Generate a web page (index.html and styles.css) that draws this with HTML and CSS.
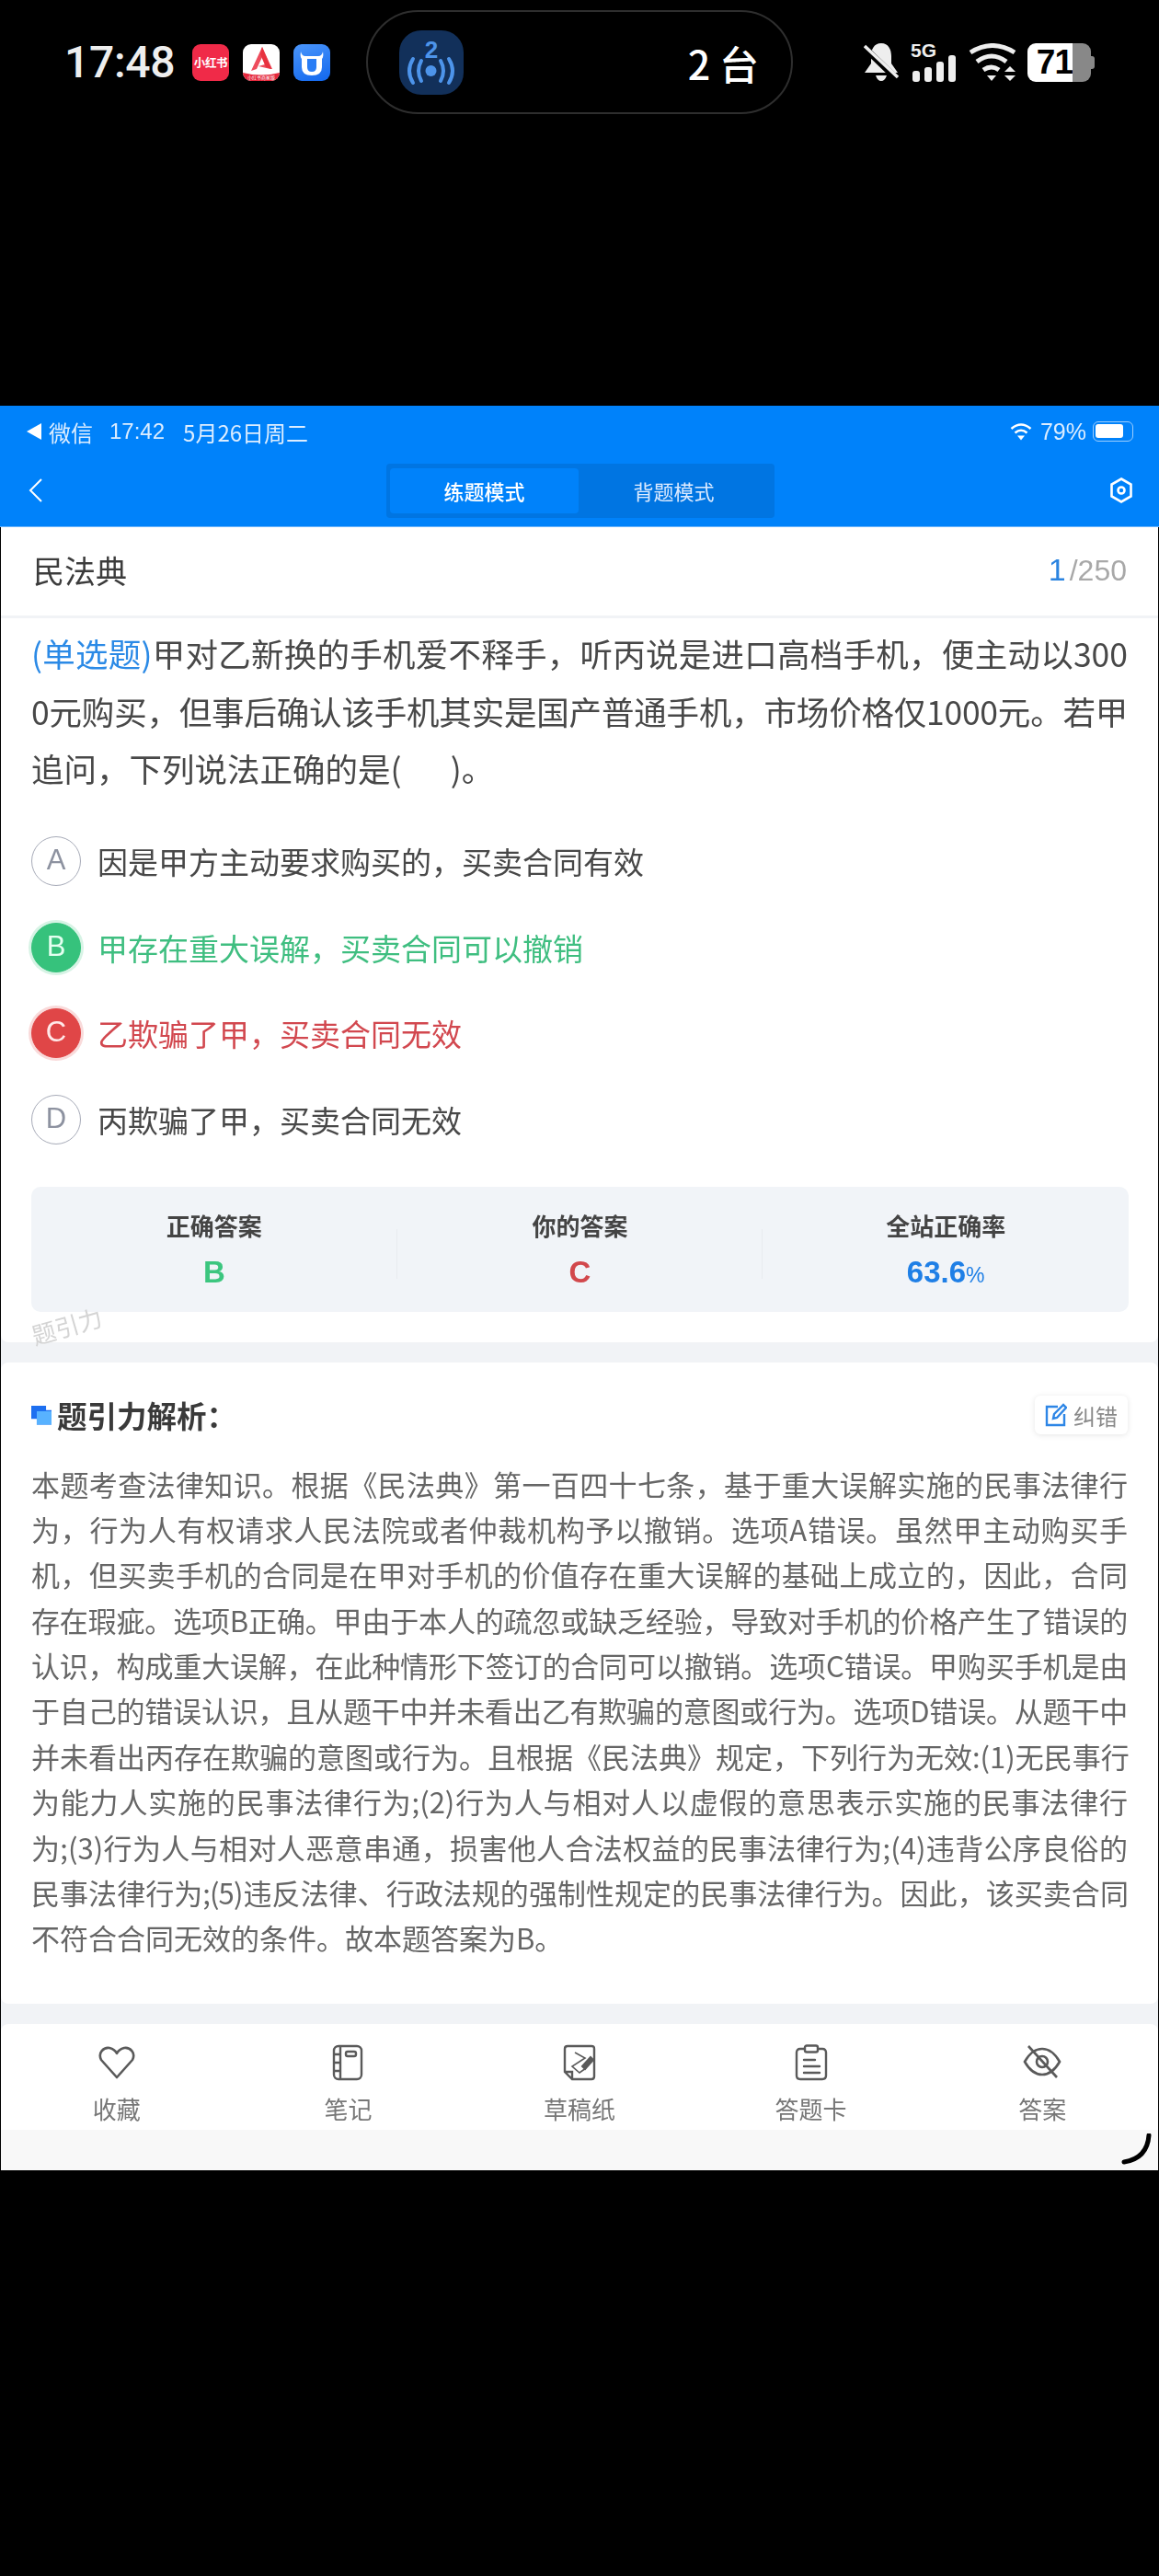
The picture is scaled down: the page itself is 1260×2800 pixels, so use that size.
FILE: index.html
```html
<!DOCTYPE html>
<html lang="zh-CN">
<head>
<meta charset="utf-8">
<title>民法典</title>
<link rel="stylesheet" href="styles.css">
</head>
<body>
<header class="os-bar">
  <div class="os-time">17:48</div>
  <div class="os-apps">
    <div class="app-icon app-red">小红书</div>
    <div class="app-icon app-white">
      <svg width="40" height="40" viewBox="0 0 40 40"><path d="M21 3 L9 29 L15 27 L21 14 L24 22 L17 24 L30 27 L32 27 Z" fill="#ee4c5c"/><path d="M21 3 L31 27 L25 25 L19 11 Z" fill="#e8323f"/><path d="M0 31 Q20 36 40 31 V34 Q40 40 34 40 H6 Q0 40 0 34 Z" fill="#e5283c"/></svg>
      <span class="app-white-text">小红书商家版</span>
    </div>
    <div class="app-icon app-blue">
      <svg width="40" height="40" viewBox="0 0 40 40"><path d="M8 8 Q9 13 13 13 H27 Q31 13 32 8 Q33 14 31 16 V25 Q31 34 20 34 Q9 34 9 25 V16 Q7 14 8 8 Z" fill="#fff"/><path d="M15 16 H25 V25 Q25 30 20 30 Q15 30 15 25 Z" fill="#2a7df5"/></svg>
    </div>
  </div>
  <div class="os-pill">
    <div class="pill-icon">
      <svg width="70" height="70" viewBox="0 0 70 70" fill="none" stroke="#4d94ea" stroke-width="4" stroke-linecap="round"><text x="35" y="30" text-anchor="middle" class="pill-two">2</text><circle cx="34.500" cy="44" r="6" fill="#4d94ea" stroke="none"/><path d="M24 33 Q18 44 24 55"/><path d="M45 33 Q51 44 45 55"/><path d="M15 31 Q7 44 15 57"/><path d="M54 31 Q62 44 54 57"/></svg>
    </div>
    <div class="pill-text">2 台</div>
  </div>
  <div class="os-status">
    <svg width="38" height="42" viewBox="0 0 38 42"><path d="M19 0 C27 0 30 7 30 14 V22 L37 32 H1 L8 22 V14 C8 7 11 0 19 0 Z M13 35 H25 Q23 41 19 41 Q15 41 13 35 Z" fill="#eee"/><path d="M0 4 L37 40" stroke="#000" stroke-width="7"/><path d="M1 3 L37 37" stroke="#eee" stroke-width="3.500"/></svg>
    <div class="sig">
      <div class="sig-5g">5G</div>
      <div class="sig-bars"><i class="b1"></i><i class="b2"></i><i class="b3"></i><i class="b4"></i></div>
    </div>
    <svg class="wifi" width="52" height="42" viewBox="0 0 52 42" fill="none" stroke="#eee" stroke-width="5"><path d="M2 10 Q26 -5 50 10"/><path d="M9 20 Q25 8 41 20"/><path d="M16 29 Q25 23 33 29"/><polygon points="20,35 30,35 25,41" fill="#eee" stroke="none"/><polygon points="39,31 51,31 45,25" fill="#eee" stroke="none"/><polygon points="39,35 51,35 45,41" fill="#eee" stroke="none"/></svg>
    <div class="battery"><span class="bat-num">71</span><span class="bat-rest"></span><span class="bat-nub"></span></div>
  </div>
</header>

<div class="app">
  <div class="blue-head">
    <div class="ios-bar">
      <div class="ios-left">
        <svg width="17" height="20" viewBox="0 0 17 20"><polygon points="0,10 16,1 16,19" fill="#fff"/></svg>
        <span class="ios-wx">微信</span><span class="ios-time">17:42</span><span class="ios-date">5月26日周二</span>
      </div>
      <div class="ios-right">
        <svg width="24" height="20" viewBox="0 0 24 20" fill="none" stroke="#fff" stroke-width="2.600"><path d="M1.500 7 Q12 -2 22.500 7"/><path d="M5.500 11.500 Q12 6 18.500 11.500"/><polygon points="12,19.500 8,14.500 16,14.500" fill="#fff" stroke="none"/></svg>
        <span class="ios-pct">79%</span>
        <span class="ios-bat"><i></i></span>
      </div>
    </div>
    <nav class="nav">
      <svg class="nav-back" width="16" height="26" viewBox="0 0 16 26" fill="none" stroke="#fff" stroke-width="2"><path d="M14 1 L2 13 L14 25"/></svg>
      <div class="tabs">
        <div class="tab tab-on">练题模式</div>
        <div class="tab">背题模式</div>
      </div>
      <svg class="nav-gear" width="24" height="28" viewBox="0 0 24 28" fill="none" stroke="#fff" stroke-width="2.600"><path d="M12 1.500 L22.500 7.500 V20.500 L12 26.500 L1.500 20.500 V7.500 Z"/><circle cx="12" cy="14" r="3.500"/></svg>
    </nav>
  </div>

  <div class="title-row">
    <div class="title">民法典</div>
    <div class="progress"><b>1</b><span>/250</span></div>
  </div>

  <section class="panel panel-q">
    <div class="question">
      <div class="qln"><span class="q-type">(单选题)</span><span>甲对乙新换的手机爱不释手，听丙说是进口高档手机，便主动以300</span></div>
      <div class="qln qln-tight">0元购买，但事后确认该手机其实是国产普通手机，市场价格仅1000元。若甲</div>
      <div class="qln qln-end">追问，下列说法正确的是(&emsp;&ensp;)。</div>
    </div>
    <ul class="options">
      <li class="opt"><span class="opt-dot">A</span>因是甲方主动要求购买的，买卖合同有效</li>
      <li class="opt opt-right"><span class="opt-dot">B</span>甲存在重大误解，买卖合同可以撤销</li>
      <li class="opt opt-wrong"><span class="opt-dot">C</span>乙欺骗了甲，买卖合同无效</li>
      <li class="opt"><span class="opt-dot">D</span>丙欺骗了甲，买卖合同无效</li>
    </ul>
    <div class="stats">
      <div class="stat"><div class="stat-label">正确答案</div><div class="stat-val green">B</div></div>
      <div class="stat"><div class="stat-label">你的答案</div><div class="stat-val red">C</div></div>
      <div class="stat"><div class="stat-label">全站正确率</div><div class="stat-val blue">63.6<small>%</small></div></div>
    </div>
    <div class="watermark">题引力</div>
  </section>

  <section class="panel panel-a">
    <div class="a-head">
      <div class="a-title"><span class="a-mark"><i></i></span>题引力解析：</div>
      <div class="a-btn">
        <svg width="24" height="26" viewBox="0 0 24 26" fill="none" stroke="#2e86e6" stroke-width="2.400"><path d="M14 4 H2 V24 H21 V12"/><path d="M9 17 L10 12 L20 2 L23 5 L13 16 Z"/></svg>
        <span>纠错</span>
      </div>
    </div>
    <div class="a-text">
      <span class="ln">本题考查法律知识。根据《民法典》第一百四十七条，基于重大误解实施的民事法律行</span>
      <span class="ln">为，行为人有权请求人民法院或者仲裁机构予以撤销。选项A错误。虽然甲主动购买手</span>
      <span class="ln">机，但买卖手机的合同是在甲对手机的价值存在重大误解的基础上成立的，因此，合同</span>
      <span class="ln sq1">存在瑕疵。选项B正确。甲由于本人的疏忽或缺乏经验，导致对手机的价格产生了错误的</span>
      <span class="ln sq1">认识，构成重大误解，在此种情形下签订的合同可以撤销。选项C错误。甲购买手机是由</span>
      <span class="ln sq1">于自己的错误认识，且从题干中并未看出乙有欺骗的意图或行为。选项D错误。从题干中</span>
      <span class="ln">并未看出丙存在欺骗的意图或行为。且根据《民法典》规定，下列行为无效:(1)无民事行</span>
      <span class="ln">为能力人实施的民事法律行为;(2)行为人与相对人以虚假的意思表示实施的民事法律行</span>
      <span class="ln">为;(3)行为人与相对人恶意串通，损害他人合法权益的民事法律行为;(4)违背公序良俗的</span>
      <span class="ln sq2">民事法律行为;(5)违反法律、行政法规的强制性规定的民事法律行为。因此，该买卖合同</span>
      <span class="ln ln-end">不符合合同无效的条件。故本题答案为B。</span>
    </div>
  </section>

  <footer class="tabbar">
    <div class="tb">
      <svg width="40" height="40" viewBox="0 0 40 40" fill="none" stroke="#5a5a5a" stroke-width="2.600" stroke-linejoin="round"><path d="M20 36 L3 17 C-1 9 6 3 12 4 C16 5 19 8 20 10 C21 8 24 5 28 4 C34 3 41 9 37 17 Z"/></svg>
      <span>收藏</span>
    </div>
    <div class="tb">
      <svg width="40" height="40" viewBox="0 0 40 40" fill="none" stroke="#5a5a5a" stroke-width="2.400"><rect x="5" y="2" width="30" height="36" rx="5"/><path d="M12 2 V38 M5 11 H12 M5 20 H12 M5 29 H12"/><rect x="18" y="8" width="11" height="5" rx="2"/></svg>
      <span>笔记</span>
    </div>
    <div class="tb">
      <svg width="40" height="40" viewBox="0 0 40 40" fill="none" stroke="#5a5a5a" stroke-width="2.400"><path d="M12 38 H33 Q36 38 36 35 V5 Q36 2 33 2 H7 Q4 2 4 5 V30 Z M4 30 H12 V38"/><path d="M15 9 L26 15 L12 24 L20 31 L27 26" stroke-width="1.600"/><path d="M23 24 L32 14 L35 17 L26 27 Z" stroke-width="2" fill="#5a5a5a"/></svg>
      <span>草稿纸</span>
    </div>
    <div class="tb">
      <svg width="40" height="40" viewBox="0 0 40 40" fill="none" stroke="#5a5a5a" stroke-width="2.400" stroke-linecap="round"><path d="M12 5 H8 Q4 5 4 9 V34 Q4 38 8 38 H32 Q36 38 36 34 V9 Q36 5 32 5 H28"/><rect x="13" y="1.500" width="14" height="7" rx="2"/><path d="M12 17 H24 M12 24 H29 M12 31 H29"/></svg>
      <span>答题卡</span>
    </div>
    <div class="tb">
      <svg width="42" height="40" viewBox="0 0 42 40" fill="none" stroke="#5a5a5a" stroke-width="2.600"><path d="M2 19 Q10 5 21 5 Q32 5 40 19 Q32 33 21 33 Q10 33 2 19 Z"/><circle cx="21" cy="19" r="6"/><path d="M6 2 L37 36"/></svg>
      <span>答案</span>
    </div>
  </footer>
  <div class="home-strip">
    <svg class="home-curve" width="34" height="34" viewBox="0 0 34 34" fill="none" stroke="#000" stroke-width="5" stroke-linecap="round"><path d="M30 2 C29 16 22 28 3 31"/></svg>
  </div>
</div>
</body>
</html>
```

FILE: styles.css
```css
* { box-sizing: border-box; }
html, body { margin: 0; padding: 0; background: #000; }
body { width: 1260px; height: 2800px; font-family: "Noto Sans CJK SC", "Liberation Sans", sans-serif; color: #444; overflow: hidden; }
ul { list-style: none; margin: 0; padding: 0; }
p { margin: 0; }

.os-bar { height: 441px; padding: 11px 0 0 70px; display: flex; align-items: flex-start; color: #eee; }
.os-time { width: 117px; height: 113px; line-height: 113px; font-family: Roboto, "Liberation Sans", sans-serif; font-size: 48px; font-weight: 500; letter-spacing: -.3px; white-space: nowrap; }
.os-apps { height: 113px; margin-left: 22px; display: flex; align-items: center; gap: 15px; }
.app-icon { width: 40px; height: 40px; border-radius: 9px; overflow: hidden; display: flex; align-items: center; justify-content: center; position: relative; }
.app-red { background: #f02a48; color: #fff; font-size: 12.500px; font-weight: 700; white-space: nowrap; letter-spacing: -.3px; }
.app-white { background: #fff; }
.app-white-text { position: absolute; left: 0; right: 0; bottom: 1px; text-align: center; font-size: 5px; line-height: 7px; color: #fff; white-space: nowrap; }
.app-blue { background: linear-gradient(160deg, #4b96fb, #1167ee); }
.os-pill { width: 464px; height: 113px; margin-left: 39px; border: 2px solid #2e2e2e; border-radius: 57px; padding: 0 35px 0 34px; display: flex; align-items: center; justify-content: space-between; }
.pill-icon { width: 70px; height: 70px; border-radius: 24px; background: #12305a; }
.pill-two { font: 700 26px "Liberation Sans", sans-serif; fill: #4d94ea; stroke: none; }
.pill-text { font-size: 43px; font-weight: 500; color: #fff; line-height: 50px; }
.os-status { height: 113px; margin-left: 77px; display: flex; align-items: center; }
.sig { width: 49px; height: 42px; margin-left: 13px; display: flex; flex-direction: column; }
.sig-5g { font: 700 21px/15px "Liberation Sans", sans-serif; color: #eee; }
.sig-bars { flex: 1; display: flex; align-items: flex-end; gap: 5px; padding: 0 0 0 2px; margin-top: -2px; }
.sig-bars i { width: 8px; background: #eee; border-radius: 3px; }
.b1 { height: 12px; } .b2 { height: 16px; } .b3 { height: 22px; } .b4 { height: 29px; }
.wifi { margin-left: 14px; }
.battery { margin-left: 12px; display: flex; align-items: center; height: 42px; }
.bat-num { width: 49px; height: 42px; background: #fff; border-radius: 9px 0 0 9px; color: #000; font: 700 37px/42px "Liberation Sans", sans-serif; text-align: right; letter-spacing: -1px; overflow: hidden; }
.bat-rest { width: 20px; height: 42px; background: #888; border-radius: 0 9px 9px 0; }
.bat-nub { width: 4px; height: 14px; background: #888; border-radius: 0 3px 3px 0; }

.app { width: 1260px; height: 1918px; background: #f1f3f6; border: solid #000; border-width: 0 1px; filter: blur(.5px); }
.blue-head { margin: 0 -1px; height: 132px; background: #0082fa; color: #fff; border-bottom: 1px solid #6ab4fb; }
.ios-bar { height: 56px; padding: 0 28px 0 29px; display: flex; align-items: center; justify-content: space-between; font-size: 24px; color: #dcedff; }
.ios-left, .ios-right { display: flex; align-items: center; }
.ios-wx { margin-left: 7px; }
.ios-time { margin-left: 18px; font-family: "Liberation Sans", sans-serif; }
.ios-date { margin-left: 20px; }
.ios-pct { font: 25px "Liberation Sans", sans-serif; margin-left: 9px; }
.ios-bat { width: 44px; height: 22px; margin-left: 7px; border: 1.500px solid #9ccdfd; border-radius: 6px; padding: 2px; display: block; }
.ios-bat i { display: block; width: 30px; height: 15px; background: #fff; border-radius: 3px; }
.nav { height: 76px; padding: 0 29px 4px 31px; display: grid; grid-template-columns: 1fr auto 1fr; align-items: center; }
.nav-gear { justify-self: end; }
.tabs { width: 422px; height: 59px; padding: 5px 4px; display: flex; background: #0075e2; border-radius: 4px; }
.tab { width: 207px; line-height: 48px; text-align: center; font-size: 22px; color: #dbeaff; }
.tab-on { width: 205px; background: #0082fa; border-radius: 4px; font-weight: 500; color: #fff; }

.title-row { height: 99px; padding: 0 34px 3px 35px; background: #fff; border-bottom: 3px solid #f1f3f6; display: flex; align-items: center; justify-content: space-between; }
.title { font-size: 34px; color: #3c3c3c; line-height: 48px; }
.progress { font-family: "Liberation Sans", sans-serif; color: #a8a8a8; font-size: 32px; }
.progress b { color: #2b84e0; font-size: 34px; font-weight: 400; margin-right: 4px; }

.panel { background: #fff; border-radius: 0 0 8px 8px; position: relative; }
.panel-q { height: 787px; padding: 7px 33px 0 33px; }
.question { font-size: 35.500px; line-height: 62.500px; color: #484848; }
.qln { height: 62.500px; white-space: nowrap; text-align: justify; text-align-last: justify; }
.qln-tight { letter-spacing: -.3px; }
.qln-end { text-align-last: left; }
.q-type { color: #2b8ae6; }
.options { margin: 23px 0 0; }
.opt { height: 93.500px; display: flex; align-items: center; font-size: 33px; color: #484848; }
.opt-dot { width: 54px; height: 54px; border-radius: 50%; margin-right: 18px; flex: none; border: 1.500px solid #a7abb8; color: #8d92a0; background: #fff; font: 400 31px/50px "Liberation Sans", sans-serif; text-align: center; }
.opt-right { color: #3fbe80; }
.opt-right .opt-dot { background: #36c27c; border-color: #36c27c; color: #e4fff0; box-shadow: 0 0 0 3px rgba(54,194,124,.2); }
.opt-wrong { color: #d2484f; }
.opt-wrong .opt-dot { background: #e04647; border-color: #e04647; color: #ffe9e9; box-shadow: 0 0 0 3px rgba(224,70,71,.2); }

.stats { margin: 26px 0 0; width: 1193px; height: 136px; background: #f1f4f8; border-radius: 10px; display: grid; grid-template-columns: repeat(3, 1fr); padding-top: 24px; }
.stat { text-align: center; position: relative; }
.stat:nth-child(-n+2)::after { content: ""; position: absolute; right: 0; top: 22px; height: 54px; width: 1px; background: #e8ebef; }
.stat-label { font-size: 26px; line-height: 36px; font-weight: 700; color: #444; }
.stat-val { margin-top: 11px; font: 700 33px/44px "Liberation Sans", sans-serif; }
.stat-val small { font-size: 23px; font-weight: 400; }
.green { color: #3cc67f; } .red { color: #d2484c; } .blue { color: #1f7fe6; }
.watermark { position: absolute; left: 38px; top: 764px; font-size: 26px; line-height: 30px; color: #d4d4d4; transform: rotate(-16deg); transform-origin: left bottom; }

.panel-a { margin-top: 22px; height: 697px; padding: 36px 33px 0 33px; border-radius: 8px; }
.a-head { height: 42px; display: flex; align-items: center; justify-content: space-between; }
.a-title { display: flex; align-items: center; font-size: 32.500px; font-weight: 700; color: #3a3a3a; line-height: 40px; }
.a-mark { width: 22px; height: 21px; margin-right: 6px; background: #1d6ff0; clip-path: polygon(0 0, 73% 0, 73% 25%, 100% 25%, 100% 100%, 27% 100%, 27% 70%, 0 70%); position: relative; }
.a-mark i { position: absolute; left: 6px; top: 6px; width: 16px; height: 15px; background: #58b2ff; }
.a-btn { width: 101px; height: 42px; background: #fff; border-radius: 6px; box-shadow: 0 1px 6px rgba(0,0,0,.1); display: flex; align-items: center; justify-content: center; gap: 7px; font-size: 24px; color: #8a8a8a; }
.a-text { margin-top: 28.500px; font-size: 31px; line-height: 49.400px; color: #666; }
.ln { display: block; height: 49.400px; white-space: nowrap; text-align: justify; text-align-last: justify; }
.ln-end { text-align-last: left; }
.sq1 { letter-spacing: -.25px; }
.sq2 { letter-spacing: -.9px; }

.tabbar { margin-top: 22px; height: 115px; padding-top: 22px; background: #fff; border-radius: 8px 8px 0 0; display: grid; grid-template-columns: repeat(5, 1fr); }
.tb { display: flex; flex-direction: column; align-items: center; }
.tb svg { height: 40px; }
.tb span { margin-top: 13px; font-size: 26px; line-height: 34px; color: #777; }
.home-strip { height: 44px; background: #f8f8f8; position: relative; }
.home-curve { position: absolute; right: 6px; top: 4px; }
```
